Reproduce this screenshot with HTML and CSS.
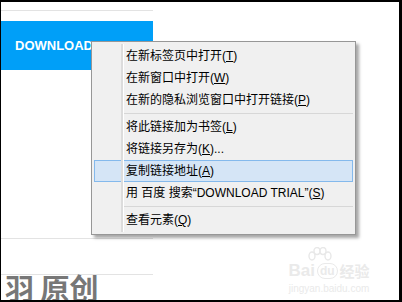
FILE: index.html
```html
<!doctype html>
<html>
	<head>
		<meta charset="utf-8" />
		<meta name="viewport" content="width=device-width, initial-scale=1" />
		<title>Link context menu</title>
		<link rel="stylesheet" href="styles.css">
	</head>
	<body>
		<div class="frame">
			<div class="column">
				<hr class="rule rule-top" />
				<a class="download" href="#">DOWNLOAD TRIAL</a>
				<hr class="rule rule-mid" />
				<hr class="rule rule-low" />
				<p class="credit">羽 原创</p>
			</div>

			<ul class="menu">
				<li>在新标签页中打开(<u>T</u>)</li>
				<li>在新窗口中打开(<u>W</u>)</li>
				<li>在新的隐私浏览窗口中打开链接(<u>P</u>)</li>
				<li class="sep"></li>
				<li>将此链接加为书签(<u>L</u>)</li>
				<li>将链接另存为(<u>K</u>)...</li>
				<li class="active">复制链接地址(<u>A</u>)</li>
				<li>用 百度 搜索“DOWNLOAD TRIAL”(<u>S</u>)</li>
				<li class="sep"></li>
				<li>查看元素(<u>Q</u>)</li>
			</ul>

			<div class="watermark">
				<svg class="paw" width="30" height="18" viewBox="0 0 30 18">
					<g fill="none" stroke="#e8e8e8" stroke-width="1.4">
						<ellipse cx="8" cy="9" rx="3" ry="4" />
						<ellipse cx="13" cy="4" rx="3" ry="3.5" />
						<ellipse cx="19" cy="4" rx="3" ry="3.5" />
						<ellipse cx="24" cy="9" rx="3" ry="4" />
					</g>
				</svg>
				<div class="mark-line">
					<span class="mark-bai">Bai</span>
					<span class="mark-du">du</span>
					<span class="mark-jy">经验</span>
				</div>
				<div class="mark-url">jingyan.baidu.com</div>
			</div>
		</div>
	</body>
</html>
```

FILE: styles.css
```css
* {
	box-sizing: border-box;
}

html {
	--color-frame: #000;
	--color-rule: #e3e3e3;
	--color-button: #009ff8;
	--color-menu-bg: #f0f0f0;
	--color-menu-border: #979797;
	--color-hl-bg: #d5e5f6;
	--color-hl-border: #84b9ec;
	--font-menu: "Liberation Sans", "Noto Sans CJK SC", sans-serif;
}

body {
	margin: 0;
	background: #fff;
}

.frame {
	position: relative;
	width: 402px;
	height: 302px;
	overflow: hidden;
	border-style: solid;
	border-color: var(--color-frame);
	border-width: 2px 3px 2px 1px;
	background: #fff;
}

.column {
	width: 152px;
}

.rule {
	border: none;
	height: 1px;
	margin: 0;
	background: var(--color-rule);
}

.rule-top {
	margin-top: 8px;
}

.rule-mid {
	margin-top: 168px;
}

.rule-low {
	margin-top: 35px;
}

.download {
	display: block;
	margin-top: 10px;
	height: 49px;
	line-height: 49px;
	padding-left: 14px;
	background: var(--color-button);
	color: #fff;
	font-family: "Liberation Sans", Arial, sans-serif;
	font-weight: bold;
	font-size: 13px;
	text-decoration: none;
}

.credit {
	margin: -1px 0 0;
	padding-left: 4px;
	font-family: "Noto Sans CJK SC", sans-serif;
	font-size: 29px;
	font-weight: bold;
	line-height: 26px;
	color: #777;
	white-space: nowrap;
}

/* context menu, floating above the page */
.menu {
	position: absolute;
	left: 90px;
	top: 39px;
	width: 265px;
	margin: 0;
	padding: 3px 2px;
	list-style: none;
	background: var(--color-menu-bg);
	border: 1px solid var(--color-menu-border);
	box-shadow: 3px 3px 3px rgba(0, 0, 0, 0.35);
	font-family: var(--font-menu);
	font-size: 12px;
	color: #000;
}

.menu::before {
	content: '';
	position: absolute;
	left: 29px;
	top: 2px;
	bottom: 2px;
	width: 2px;
	background: #dcdcdc;
	border-right: 1px solid #fff;
	z-index: 1;
}

.menu li {
	height: 22px;
	line-height: 20px;
	padding-left: 31px;
	border: 1px solid transparent;
	white-space: nowrap;
}

.menu li.active {
	background: var(--color-hl-bg);
	border-color: var(--color-hl-border);
}

.menu li.sep {
	height: 5px;
	padding: 0;
	border: none;
	margin-left: 30px;
	position: relative;
}

.menu li.sep::after {
	content: '';
	position: absolute;
	left: 0;
	right: 0;
	top: 2px;
	height: 1px;
	background: #d7d7d7;
}

.menu u {
	text-underline-offset: 1px;
}

/* faint site watermark */
.watermark {
	position: absolute;
	left: 283px;
	top: 245px;
	width: 90px;
	color: #eaeaea;
	font-family: "Liberation Sans", sans-serif;
	text-align: center;
}

.paw {
	display: block;
	margin: 0 auto -4px 20px;
}

.mark-line {
	display: flex;
	align-items: center;
	justify-content: center;
	gap: 2px;
	font-size: 17px;
	font-weight: bold;
	line-height: 20px;
}

.mark-du {
	font-size: 12px;
	border: 1.5px solid #eaeaea;
	border-radius: 8px;
	padding: 0 2px;
	line-height: 14px;
}

.mark-jy {
	font-family: "Noto Sans CJK SC", sans-serif;
	font-size: 15px;
}

.mark-url {
	font-size: 10px;
	line-height: 12px;
	margin-top: 2px;
}
```
